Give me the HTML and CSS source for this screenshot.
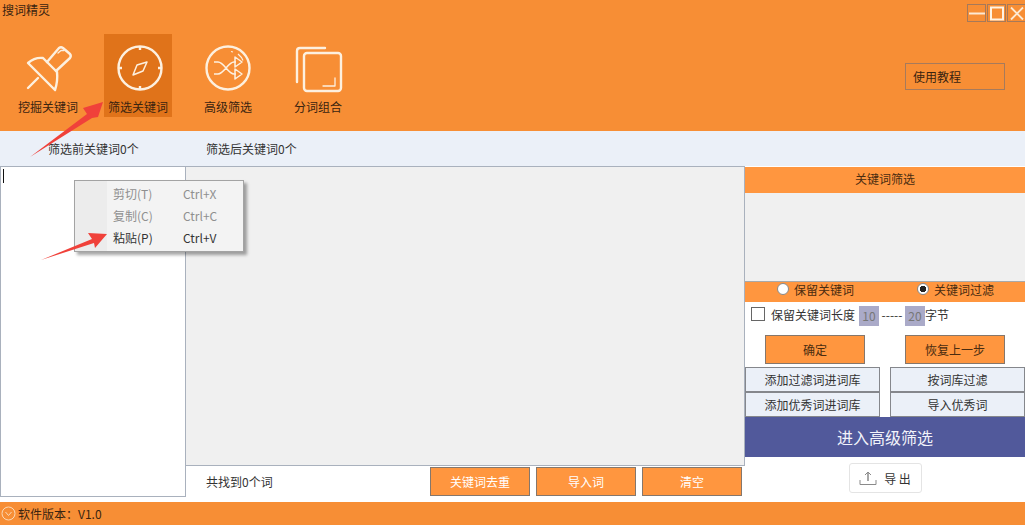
FILE: index.html
```html
<!DOCTYPE html>
<html lang="zh-CN">

<head>
  <meta charset="UTF-8">
  <title>搜词精灵</title>
  <link rel="stylesheet" href="styles.css">
</head>

<body>
  <div class="app">
    <header class="header">
      <div class="title-row">
        <span class="app-title">搜词精灵</span>
        <div class="win-buttons">
          <span class="win-btn">
            <svg width="18" height="17" viewBox="0 0 18 17"><path d="M1 8.500H17" stroke="#fde9d3" stroke-width="2" /></svg>
          </span>
          <span class="win-btn">
            <svg width="18" height="17" viewBox="0 0 18 17"><rect x="3" y="2.500" width="12" height="12" fill="none" stroke="#fff3e4" stroke-width="2" /></svg>
          </span>
          <span class="win-btn">
            <svg width="18" height="17" viewBox="0 0 18 17"><path d="M3 2.500L15 14.500M15 2.500L3 14.500" stroke="#fde9d3" stroke-width="1.800" /></svg>
          </span>
        </div>
      </div>
      <div class="tool-row">
        <nav class="tools">
          <div class="tool">
            <svg class="tool-icon" width="50" height="50" viewBox="0 0 50 50" fill="none" stroke="#fdf0df" stroke-width="2.400" stroke-linejoin="round" stroke-linecap="round">
              <path d="M24 17L36 3Q38 1.500 40 3L47 9Q48.500 11 47 13L33 26" />
              <path d="M5 18Q12 12 20 13L34 27Q35 36 32 45Z" />
              <path d="M15 33L5 43" />
              <path d="M35 8L38 5.500H41" stroke-width="1.300" />
            </svg>
            <span class="tool-label">挖掘关键词</span>
          </div>
          <div class="tool tool-active">
            <svg class="tool-icon" width="50" height="50" viewBox="0 0 50 50" fill="none" stroke="#fdf0df" stroke-width="2.400" stroke-linejoin="round">
              <circle cx="27" cy="23" r="21.500" />
              <path d="M27 1.500V5M27 41V44.500M5.500 23H9M45 23H48.500" />
              <path d="M24 20L34 17L30 26L20 30Z" stroke-width="1.500" />
            </svg>
            <span class="tool-label">筛选关键词</span>
          </div>
          <div class="tool">
            <svg class="tool-icon" width="50" height="50" viewBox="0 0 50 50" fill="none" stroke="#fdf0df" stroke-width="2.400" stroke-linejoin="round">
              <circle cx="25" cy="23" r="21.500" />
              <path d="M28 6.500L30 7M35 9L38.500 12.500L40 15.500" stroke-width="1.200" />
              <path d="M11 17H15C21 17 25 29 31 29H33M11 29H15C21 29 25 17 31 17H33" stroke-width="1.500" />
              <path d="M32 12L39 17L32 22ZM32 24L39 29L32 34Z" stroke-width="1.500" />
            </svg>
            <span class="tool-label">高级筛选</span>
          </div>
          <div class="tool">
            <svg class="tool-icon" width="50" height="50" viewBox="0 0 50 50" fill="none" stroke="#fdf0df" stroke-width="2.400" stroke-linejoin="round" stroke-linecap="round">
              <path d="M4 37V6Q4 3 7 3H32" />
              <rect x="11" y="8" width="37" height="38" rx="3" />
              <path d="M30 41H42V33" stroke-width="1.300" />
            </svg>
            <span class="tool-label">分词组合</span>
          </div>
        </nav>
        <div class="help-box">使用教程</div>
      </div>
    </header>

    <div class="count-bar">
      <span class="count-before">筛选前关键词0个</span>
      <span class="count-after">筛选后关键词0个</span>
    </div>

    <main class="main">
      <div class="input-pane"><span class="caret"></span></div>

      <div class="center-col">
        <div class="result-pane"></div>
        <div class="result-foot">
          <span class="found">共找到0个词</span>
          <div class="foot-buttons">
            <button class="btn-orange btn-white">关键词去重</button>
            <button class="btn-orange btn-white">导入词</button>
            <button class="btn-orange btn-white">清空</button>
          </div>
        </div>
      </div>

      <aside class="side">
        <div class="side-title">关键词筛选</div>
        <div class="side-box"></div>
        <div class="radio-row">
          <label class="radio"><span class="radio-dot"></span>保留关键词</label>
          <label class="radio"><span class="radio-dot radio-on"></span>关键词过滤</label>
        </div>
        <div class="length-row">
          <span class="check"></span>
          <span class="length-text">保留关键词长度</span>
          <span class="num">10</span>
          <span class="dash">-----</span>
          <span class="num">20</span>
          <span>字节</span>
        </div>
        <div class="action-row">
          <button class="btn-orange">确定</button>
          <button class="btn-orange">恢复上一步</button>
        </div>
        <div class="lib-grid">
          <button class="btn-light">添加过滤词进词库</button>
          <button class="btn-light">按词库过滤</button>
          <button class="btn-light">添加优秀词进词库</button>
          <button class="btn-light">导入优秀词</button>
        </div>
        <div class="enter-btn">进入高级筛选</div>
        <div class="export-row">
          <button class="export-btn">
            <svg width="18" height="16" viewBox="0 0 18 16" fill="none" stroke="#8a8a8a" stroke-width="1">
              <path d="M1 10V14.500H17V10" />
              <path d="M9 11V2" stroke-width="1.500" />
              <path d="M6 5L9 2L12 5" />
            </svg>
            <span>导 出</span>
          </button>
        </div>
      </aside>
    </main>

    <footer class="footer">
      <svg width="15" height="15" viewBox="0 0 15 15" fill="none" stroke="#fbd9b5" stroke-width="1">
        <circle cx="7.500" cy="7.500" r="6.500" />
        <path d="M4.500 6L7.500 9.500L10.500 6" />
      </svg>
      <span>软件版本：V1.0</span>
    </footer>

    <!-- 右键菜单 -->
    <div class="context-menu">
      <div class="menu-item menu-off"><span>剪切(T)</span><span>Ctrl+X</span></div>
      <div class="menu-item menu-off"><span>复制(C)</span><span>Ctrl+C</span></div>
      <div class="menu-item"><span>粘贴(P)</span><span>Ctrl+V</span></div>
    </div>

    <!-- 标注箭头 -->
    <svg class="arrow arrow-top" width="80" height="60" viewBox="0 0 80 60">
      <path d="M0 58L57 15L53 9L73 3L68 18L62 19Z" fill="#f0413a" />
    </svg>
    <svg class="arrow arrow-menu" width="70" height="30" viewBox="0 0 70 30">
      <path d="M1 29L52 8L48 2L67 3L55 17L54 12Z" fill="#f0413a" />
    </svg>
  </div>
</body>

</html>
```

FILE: styles.css
```css
* {
  box-sizing: border-box;
}

body {
  margin: 0;
  font-family: "Noto Sans CJK SC", "Liberation Sans", sans-serif;
  font-size: 12px;
  color: #333;
  background-color: #fff;
}

button {
  font-family: inherit;
  font-size: 12px;
  padding: 0;
  cursor: pointer;
}

.app {
  position: relative;
  width: 1025px;
  height: 525px;
  overflow: hidden;
  display: flex;
  flex-direction: column;
}

/* 顶部 */
.header {
  height: 131px;
  background-color: #f78e35;
  color: #3a2410;
}

.title-row {
  height: 34px;
  display: flex;
  justify-content: space-between;
  padding: 1px 0 0 2px;
}

.app-title {
  line-height: 18px;
}

.win-buttons {
  display: flex;
  margin: 3px -1px 0 0;
  height: 18px;
}

.win-btn {
  width: 19px;
  height: 18px;
  border: 1px solid #a5795a;
  margin-left: 1px;
  display: flex;
}

.win-btn svg {
  display: block;
  margin: -0.5px;
}

.tool-row {
  display: flex;
  justify-content: space-between;
  padding-left: 14px;
  padding-right: 20px;
}

.tools {
  display: flex;
  gap: 22px;
}

.tool {
  width: 68px;
  height: 83px;
  display: flex;
  flex-direction: column;
  align-items: center;
  padding-top: 11px;
}

.tool-active {
  background-color: #e0731a;
}

.tool-icon {
  display: block;
  flex-shrink: 0;
}

.tool-label {
  margin-top: 3px;
  line-height: 18px;
  white-space: nowrap;
}

.help-box {
  width: 100px;
  height: 27px;
  margin-top: 29px;
  border: 1px solid #a67a5c;
  padding-left: 7px;
  line-height: 25px;
  color: #3a2410;
}

/* 统计条 */
.count-bar {
  height: 35px;
  background-color: #ebf0f8;
  display: flex;
  align-items: center;
  line-height: 18px;
}

.count-before {
  margin-left: 48px;
  width: 158px;
}

/* 主体 */
.main {
  height: 336px;
  display: flex;
}

.input-pane {
  width: 186px;
  height: 331px;
  border: 1px solid #a9b1bd;
  background-color: #fff;
  padding: 2px;
}

.caret {
  display: block;
  width: 1px;
  height: 14px;
  margin-left: 0;
  background-color: #111;
}

.center-col {
  width: 559px;
  display: flex;
  flex-direction: column;
}

.result-pane {
  height: 300px;
  background-color: #f0f0f0;
  border: 1px solid #a9b1bd;
  border-left: none;
}

.result-foot {
  display: flex;
  justify-content: space-between;
  padding: 1px 3px 0 20px;
}

.found {
  line-height: 29px;
}

.foot-buttons {
  display: flex;
  gap: 6px;
}

.btn-orange {
  width: 100px;
  height: 29px;
  background-color: #ff963f;
  border: 1px solid #85776c;
  color: #4a2c10;
}

.btn-white {
  color: #fff;
}

/* 右侧 */
.side {
  width: 280px;
  display: flex;
  flex-direction: column;
}

.side-title {
  height: 26px;
  margin-top: 1px;
  background-color: #ff963f;
  color: #4a2c10;
  text-align: center;
  line-height: 24px;
}

.side-box {
  height: 89px;
  background-color: #f0f0f0;
  border-bottom: 1px solid #a9a9a9;
}

.radio-row {
  height: 20px;
  padding: 0 0 6px 32px;
  background-color: #ff963f;
  color: #4a2c10;
  display: flex;
  gap: 63px;
  align-items: center;
}

.radio {
  display: flex;
  align-items: center;
  gap: 5px;
}

.radio-dot {
  width: 12px;
  height: 12px;
  border-radius: 50%;
  background-color: #fff;
  border: 1px solid #888;
}

.radio-on {
  background: radial-gradient(circle, #222 0 3px, #fff 3.500px);
}

.length-row {
  height: 24px;
  padding-left: 6px;
  display: flex;
  align-items: center;
}

.check {
  width: 14px;
  height: 14px;
  border: 1px solid #666;
  background-color: #fff;
  margin-right: 6px;
}

.length-text {
  margin-right: 4px;
}

.num {
  width: 20px;
  height: 20px;
  background-color: #aaaac8;
  color: #777;
  text-align: center;
  line-height: 20px;
  margin-top: 4px;
}

.dash {
  width: 26px;
  text-align: center;
  overflow: hidden;
}

.action-row {
  display: flex;
  justify-content: space-between;
  padding: 0 20px;
  margin-top: 9px;
}

.lib-grid {
  margin-top: 3px;
  display: grid;
  grid-template-columns: 135px 135px;
  grid-auto-rows: 25px;
  column-gap: 10px;
}

.btn-light {
  background-color: #ebf0f8;
  border: 1px solid #85878c;
  color: #333;
}

.enter-btn {
  height: 40px;
  background-color: #51599b;
  color: #f2f3fa;
  font-size: 16px;
  text-align: center;
  line-height: 40px;
}

.export-row {
  display: flex;
  justify-content: center;
  padding: 6px 31px 0 0;
  margin-left: 31px;
}

.export-btn {
  width: 73px;
  height: 30px;
  background-color: #fff;
  border: 1px solid #e4e4e4;
  border-radius: 3px;
  display: flex;
  align-items: center;
  justify-content: center;
  gap: 7px;
  color: #333;
}

/* 底部 */
.footer {
  height: 23px;
  background-color: #f78e35;
  color: #3a2410;
  display: flex;
  align-items: center;
  gap: 2px;
  padding-left: 1px;
}

/* 右键菜单 */
.context-menu {
  position: absolute;
  left: 74px;
  top: 180px;
  width: 170px;
  height: 72px;
  padding: 1px 0;
  background: linear-gradient(to right, #ececec 32px, #f3f3f3 32px);
  border: 1px solid #a3a3a3;
  box-shadow: 3px 3px 3px rgba(0, 0, 0, 0.35);
}

.menu-item {
  height: 22px;
  padding-left: 38px;
  display: flex;
  align-items: center;
  color: #333;
}

.menu-item span:first-child {
  width: 70px;
}

.menu-off {
  color: #8f8f8f;
}

/* 标注箭头 */
.arrow {
  position: absolute;
}

.arrow-top {
  left: 30px;
  top: 99px;
}

.arrow-menu {
  left: 40px;
  top: 231px;
}
```
